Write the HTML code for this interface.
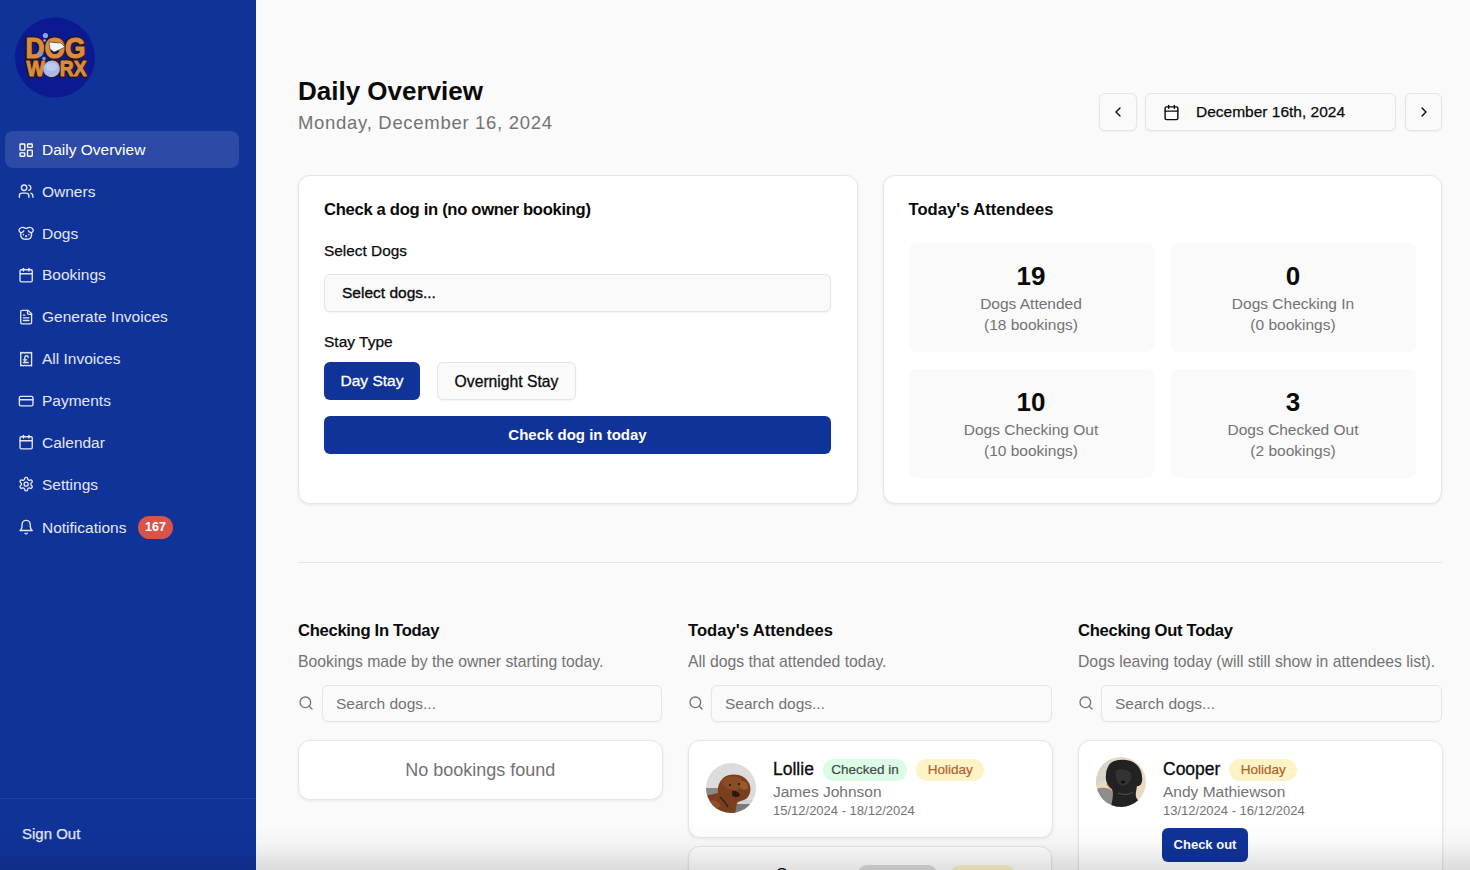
<!DOCTYPE html>
<html><head><meta charset="utf-8">
<style>
*{box-sizing:border-box;margin:0;padding:0}
html,body{width:1470px;height:870px;overflow:hidden}
body{font-family:"Liberation Sans",sans-serif;background:#fafafa;color:#0a0a0a;position:relative}
.abs{position:absolute}
svg.i{fill:none;stroke:currentColor;stroke-width:2;stroke-linecap:round;stroke-linejoin:round}
#sb{left:0;top:0;width:256px;height:870px;background:#10339a}
.nav{position:absolute;left:5px;width:234px;height:37px;border-radius:8px;color:#e3e7f3;font-size:15.5px;line-height:37px}
.nav svg{position:absolute;left:12.5px;top:10.5px;width:16.3px;height:16.3px}
.nav span{position:absolute;left:37px;top:0;white-space:nowrap}
.nav.act{background:rgba(255,255,255,.12);color:#fff}
.badge{position:absolute;background:#d9534b;color:#fff;font-weight:700;font-size:12.5px;border-radius:12px;height:23px;line-height:23px;padding:0 7px}
.card{position:absolute;background:#fff;border:1px solid #e6e6e6;border-radius:12px;box-shadow:0 1px 3px rgba(0,0,0,.08)}
.btn{position:absolute;border-radius:6px;font-size:15px;text-align:center}
.outline{background:#fafafa;border:1px solid #e5e5e5;box-shadow:0 1px 2px rgba(0,0,0,.05)}
.blue{background:#10339a;color:#fff;font-weight:700}
.stat{position:absolute;background:#fafafa;border-radius:8px;width:245px;height:109px;text-align:center}
.stat b{display:block;font-size:26px;font-weight:700;margin-top:19px;line-height:28px;margin-bottom:3px}
.stat div{font-size:15.5px;color:#737373;line-height:21px}
.h3{position:absolute;font-size:16.6px;font-weight:700;white-space:nowrap;line-height:20px;letter-spacing:-.3px}
.desc{position:absolute;font-size:15.75px;color:#737373;white-space:nowrap;margin-top:.5px}
.search{position:absolute;height:37px;border:1px solid #e5e5e5;border-radius:6px;background:#fafafa;color:#737373;font-size:15.5px;line-height:35px;padding-left:13px;box-shadow:0 1px 2px rgba(0,0,0,.04)}
.sicon{position:absolute;width:16px;height:16px;color:#737373}
.pill{display:inline-block;border-radius:12px;font-size:13.5px;font-weight:400;height:22px;line-height:22px;padding:0 10px;-webkit-text-stroke:.35px currentColor}
.med{-webkit-text-stroke:.25px currentColor}
.ov{position:absolute;left:0;top:822px;width:1470px;height:48px;background:linear-gradient(to bottom,rgba(0,0,0,0) 0%,rgba(0,0,0,.025) 45%,rgba(0,0,0,.12) 100%);pointer-events:none}
</style></head><body>

<div id="sb" class="abs">
  <!-- logo -->
  <svg class="abs" style="left:16px;top:18px;overflow:visible" width="80" height="80" viewBox="0 0 80 80">
    <circle cx="39" cy="39.5" r="40" fill="#0c1a92"/>
    <g font-family="Liberation Sans" font-weight="700" stroke-linejoin="round">
      <text x="9.5" y="39.5" font-size="29" textLength="60" lengthAdjust="spacingAndGlyphs" fill="#2b1d18" stroke="#241813" stroke-width="3.6">DOG</text>
      <text x="10.5" y="57.5" font-size="22" textLength="60" lengthAdjust="spacingAndGlyphs" fill="#2b1d18" stroke="#241813" stroke-width="3.6">WORX</text>
      <text x="9.5" y="39.5" font-size="29" textLength="60" lengthAdjust="spacingAndGlyphs" fill="#dc8a3e" stroke="#dc8a3e" stroke-width="1.1">DOG</text>
      <text x="10.5" y="57.5" font-size="22" textLength="60" lengthAdjust="spacingAndGlyphs" fill="#dc8a3e" stroke="#dc8a3e" stroke-width="1.1">WORX</text>
    </g>
    <path d="M33 24 L45 25 L49 29 L43 32 L38 34 L34 31 Z" fill="#f4f4f4" stroke="#333" stroke-width=".6"/>
    <circle cx="29.4" cy="17.5" r="2.6" fill="#8ea4e0"/>
    <circle cx="28.6" cy="22.5" r="1.3" fill="#8ea4e0"/>
    <circle cx="24" cy="35.8" r="2.6" fill="#7f96d8"/>
    <circle cx="28" cy="40.6" r="1.8" fill="#7f96d8"/>
    <circle cx="35.4" cy="51" r="8.3" fill="#a9b8ea"/>
    <ellipse cx="35.4" cy="49" rx="6" ry="4" fill="#c7d1f3" opacity=".7"/>
  </svg>

  <div class="nav act" style="top:131px"><svg class="i" viewBox="0 0 24 24"><rect width="7" height="9" x="3" y="3" rx="1"/><rect width="7" height="5" x="14" y="3" rx="1"/><rect width="7" height="9" x="14" y="12" rx="1"/><rect width="7" height="5" x="3" y="16" rx="1"/></svg><span>Daily Overview</span></div>
  <div class="nav" style="top:172.5px"><svg class="i" viewBox="0 0 24 24"><path d="M16 21v-2a4 4 0 0 0-4-4H6a4 4 0 0 0-4 4v2"/><circle cx="9" cy="7" r="4"/><path d="M22 21v-2a4 4 0 0 0-3-3.87"/><path d="M16 3.13a4 4 0 0 1 0 7.75"/></svg><span>Owners</span></div>
  <div class="nav" style="top:214.5px"><svg class="i" viewBox="0 0 24 24"><path d="M11.25 16.25h1.5L12 17z"/><path d="M16 14v.5"/><path d="M4.42 11.247A13.152 13.152 0 0 0 4 14.556C4 18.728 7.582 21 12 21s8-2.272 8-6.444a11.702 11.702 0 0 0-.493-3.309"/><path d="M8 14v.5"/><path d="M8.5 8.5c-.384 1.05-1.083 2.028-2.344 2.476-1.931.722-3.424-.299-4.04-1.386-.616-1.087-.68-2.803.378-4.168C3.618 4.05 5.23 3.5 7 3.5c1.5 0 3 .5 4 1.5h2c1-1 2.5-1.5 4-1.5 1.77 0 3.382.55 4.466 1.922 1.058 1.365.994 3.081.378 4.168-.616 1.087-2.109 2.108-4.04 1.386-1.261-.448-1.96-1.426-2.344-2.476"/></svg><span>Dogs</span></div>
  <div class="nav" style="top:256px"><svg class="i" viewBox="0 0 24 24"><path d="M8 2v4"/><path d="M16 2v4"/><rect width="18" height="18" x="3" y="4" rx="2"/><path d="M3 10h18"/></svg><span>Bookings</span></div>
  <div class="nav" style="top:298px"><svg class="i" viewBox="0 0 24 24"><path d="M15 2H6a2 2 0 0 0-2 2v16a2 2 0 0 0 2 2h12a2 2 0 0 0 2-2V7Z"/><path d="M14 2v4a2 2 0 0 0 2 2h4"/><path d="M10 9H8"/><path d="M16 13H8"/><path d="M16 17H8"/></svg><span>Generate Invoices</span></div>
  <div class="nav" style="top:340px"><svg class="i" viewBox="0 0 24 24"><path d="M4 2v20l2-1 2 1 2-1 2 1 2-1 2 1 2-1 2 1V2l-2 1-2-1-2 1-2-1-2 1-2-1-2 1Z"/><path d="M8 13h5"/><path d="M10 17V9.5a2.5 2.5 0 0 1 5 0"/><path d="M8 17h7"/></svg><span>All Invoices</span></div>
  <div class="nav" style="top:382px"><svg class="i" viewBox="0 0 24 24"><rect width="20" height="14" x="2" y="5" rx="2"/><path d="M2 10h20"/></svg><span>Payments</span></div>
  <div class="nav" style="top:423.5px"><svg class="i" viewBox="0 0 24 24"><path d="M8 2v4"/><path d="M16 2v4"/><rect width="18" height="18" x="3" y="4" rx="2"/><path d="M3 10h18"/></svg><span>Calendar</span></div>
  <div class="nav" style="top:465.5px"><svg class="i" viewBox="0 0 24 24"><path d="M12.22 2h-.44a2 2 0 0 0-2 2v.18a2 2 0 0 1-1 1.73l-.43.25a2 2 0 0 1-2 0l-.15-.08a2 2 0 0 0-2.73.73l-.22.38a2 2 0 0 0 .73 2.73l.15.1a2 2 0 0 1 1 1.72v.51a2 2 0 0 1-1 1.74l-.15.09a2 2 0 0 0-.73 2.73l.22.38a2 2 0 0 0 2.73.73l.15-.08a2 2 0 0 1 2 0l.43.25a2 2 0 0 1 1 1.73V20a2 2 0 0 0 2 2h.44a2 2 0 0 0 2-2v-.18a2 2 0 0 1 1-1.73l.43-.25a2 2 0 0 1 2 0l.15.08a2 2 0 0 0 2.73-.73l.22-.39a2 2 0 0 0-.73-2.73l-.15-.08a2 2 0 0 1-1-1.74v-.5a2 2 0 0 1 1-1.74l.15-.09a2 2 0 0 0 .73-2.73l-.22-.38a2 2 0 0 0-2.73-.73l-.15.08a2 2 0 0 1-2 0l-.43-.25a2 2 0 0 1-1-1.73V4a2 2 0 0 0-2-2z"/><circle cx="12" cy="12" r="3"/></svg><span>Settings</span></div>
  <div class="nav" style="top:508.5px"><svg class="i" viewBox="0 0 24 24"><path d="M6 8a6 6 0 0 1 12 0c0 7 3 9 3 9H3s3-2 3-9"/><path d="M10.3 21a1.94 1.94 0 0 0 3.4 0"/></svg><span>Notifications</span></div>
  <div class="badge" style="left:138px;top:515.5px">167</div>

  <div class="abs" style="left:0;top:798px;width:256px;height:1px;background:rgba(255,255,255,.08)"></div>
  <div class="abs med" style="left:22px;top:825px;font-size:15px;color:#e3e7f3">Sign Out</div>
</div>

<!-- header -->
<div class="abs" style="left:298px;top:74px;font-size:26px;font-weight:700;line-height:34px">Daily Overview</div>
<div class="abs" style="left:298px;top:111px;font-size:18.5px;color:#737373;letter-spacing:.7px;line-height:24px">Monday, December 16, 2024</div>

<div class="btn outline" style="left:1099px;top:93px;width:37.5px;height:37.5px"><svg class="i abs" style="left:10px;top:10px" width="16" height="16" viewBox="0 0 24 24"><path d="m15 18-6-6 6-6"/></svg></div>
<div class="btn outline" style="left:1145px;top:93px;width:251px;height:37.5px;text-align:left">
  <svg class="i abs" style="left:16.5px;top:9.5px" width="17" height="17" viewBox="0 0 24 24"><path d="M8 2v4"/><path d="M16 2v4"/><rect width="18" height="18" x="3" y="4" rx="2"/><path d="M3 10h18"/></svg>
  <span class="abs med" style="left:50px;top:9px;font-size:15.5px;white-space:nowrap">December 16th, 2024</span>
</div>
<div class="btn outline" style="left:1404.5px;top:93px;width:37.5px;height:37.5px"><svg class="i abs" style="left:10px;top:10px" width="16" height="16" viewBox="0 0 24 24"><path d="m9 18 6-6-6-6"/></svg></div>

<!-- card 1 -->
<div class="card" style="left:298px;top:175px;width:559.5px;height:328.5px">
  <div class="h3" style="left:25px;top:24px">Check a dog in (no owner booking)</div>
  <div class="abs med" style="left:25px;top:66px;font-size:15.4px">Select Dogs</div>
  <div class="btn outline" style="left:25px;top:98px;width:507px;height:37.5px;text-align:left;padding-left:17px;line-height:35px;font-size:15.5px;-webkit-text-stroke:.35px currentColor">Select dogs...</div>
  <div class="abs med" style="left:25px;top:157px;font-size:15.5px">Stay Type</div>
  <div class="btn blue" style="left:25px;top:186px;width:96px;height:38px;line-height:38px;font-weight:400;font-size:15.5px;-webkit-text-stroke:.3px currentColor">Day Stay</div>
  <div class="btn outline" style="left:138px;top:186px;width:139px;height:38px;line-height:37px;font-size:15.7px;-webkit-text-stroke:.3px currentColor">Overnight Stay</div>
  <div class="btn blue" style="left:25px;top:240px;width:507px;height:38px;line-height:38px">Check dog in today</div>
</div>

<!-- card 2 -->
<div class="card" style="left:882.5px;top:175px;width:559.5px;height:328.5px">
  <div class="h3" style="left:25px;top:24px;letter-spacing:0">Today's Attendees</div>
  <div class="stat" style="left:25px;top:67px"><b>19</b><div>Dogs Attended</div><div>(18 bookings)</div></div>
  <div class="stat" style="left:287px;top:67px"><b>0</b><div>Dogs Checking In</div><div>(0 bookings)</div></div>
  <div class="stat" style="left:25px;top:193px"><b>10</b><div>Dogs Checking Out</div><div>(10 bookings)</div></div>
  <div class="stat" style="left:287px;top:193px"><b>3</b><div>Dogs Checked Out</div><div>(2 bookings)</div></div>
</div>

<div class="abs" style="left:298px;top:562px;width:1144px;height:1px;background:#e5e5e5"></div>

<!-- columns -->
<div class="h3" style="left:298px;top:621px">Checking In Today</div>
<div class="desc" style="left:298px;top:652px">Bookings made by the owner starting today.</div>
<svg class="i sicon" style="left:298px;top:695px" viewBox="0 0 24 24"><circle cx="11" cy="11" r="8"/><path d="m21 21-4.3-4.3"/></svg>
<div class="search" style="left:322px;top:685px;width:340px">Search dogs...</div>
<div class="card" style="left:298px;top:739.5px;width:364.5px;height:60px;text-align:center;line-height:59px;font-size:18px;color:#737373">No bookings found</div>

<div class="h3" style="left:688px;top:621px;letter-spacing:0">Today's Attendees</div>
<div class="desc" style="left:688px;top:652px">All dogs that attended today.</div>
<svg class="i sicon" style="left:688px;top:695px" viewBox="0 0 24 24"><circle cx="11" cy="11" r="8"/><path d="m21 21-4.3-4.3"/></svg>
<div class="search" style="left:711px;top:685px;width:341px">Search dogs...</div>
<div class="card" style="left:688px;top:739.5px;width:364.5px;height:98px">
  <svg class="abs" style="left:17px;top:22px" width="50" height="50" viewBox="0 0 50 50"><defs><clipPath id="c1"><circle cx="25" cy="25" r="25"/></clipPath></defs><g clip-path="url(#c1)">
<rect width="50" height="50" fill="#dcdcdc"/>
<path d="M0 25 H14 V34 H0Z" fill="#8a8a8a"/>
<path d="M26 41 H50 V50 H26Z" fill="#7a7a7a"/>
<path d="M26 37 H50 V41 H26Z" fill="#d2d2d2"/>
<path d="M0 33 C5 31 9 31 12 30 C11 22 15 14 23 12 C31 10 40 13 43 20 C46 26 44 33 40 36 C36 38 33 38 31 40 C30 44 30 48 29 50 H0Z" fill="#7a3f1c"/>
<path d="M15 18 C19 13 28 12 34 15 C38 19 36 25 31 27 C25 28 18 25 15 18Z" fill="#8a4c24"/>
<path d="M34 18 C38 17 42 20 42 25 C40 28 36 27 34 24Z" fill="#9a5a2c"/>
<path d="M26 28 C29 27 33 29 34 32 C32 35 28 35 26 32Z" fill="#2a1a12"/>
<path d="M3 38 C8 36 12 38 14 42 L10 50 H0 V40Z" fill="#8f4f28"/>
<circle cx="24" cy="22" r="1.1" fill="#1b120c"/><circle cx="33" cy="21" r="1" fill="#1b120c"/>
<path d="M14 34 C17 37 20 40 22 44" stroke="#3a2214" stroke-width="1.6" fill="none"/>
</g></svg>
  <div class="abs" style="left:84px;top:17.5px;white-space:nowrap;font-size:17.5px;line-height:22px;-webkit-text-stroke:.3px currentColor">Lollie <span class="pill" style="background:#dcfce7;color:#3f4a44;margin-left:4px;padding:0 8.5px;vertical-align:1px;-webkit-text-stroke:.2px currentColor">Checked in</span> <span class="pill" style="background:#fef3c7;color:#b0612a;margin-left:4px;padding:0 11.5px;vertical-align:1px;-webkit-text-stroke:.2px currentColor">Holiday</span></div>
  <div class="abs" style="left:84px;top:42.5px;font-size:15.5px;color:#737373">James Johnson</div>
  <div class="abs" style="left:84px;top:62.5px;font-size:13px;color:#737373">15/12/2024 - 18/12/2024</div>
</div>
<div class="card" style="left:688px;top:846px;width:364px;height:97px">
  <div class="abs" style="left:87px;top:17px;width:70px;height:8px;overflow:hidden"><span style="display:block;font-size:17.5px;line-height:22px;margin-top:0">Seaweed</span></div>
  <span class="pill abs" style="left:168px;top:18px;background:#dcdcdc;color:#3f4a44;width:81px">&nbsp;</span>
  <span class="pill abs" style="left:261px;top:18px;background:#fef3c7;color:#b45309;width:66px">&nbsp;</span>
</div>

<div class="h3" style="left:1078px;top:621px">Checking Out Today</div>
<div class="desc" style="left:1078px;top:652px">Dogs leaving today (will still show in attendees list).</div>
<svg class="i sicon" style="left:1078px;top:695px" viewBox="0 0 24 24"><circle cx="11" cy="11" r="8"/><path d="m21 21-4.3-4.3"/></svg>
<div class="search" style="left:1101px;top:685px;width:341px">Search dogs...</div>
<div class="card" style="left:1078px;top:739.5px;width:364.5px;height:160px">
  <svg class="abs" style="left:17px;top:16px" width="50" height="50" viewBox="0 0 50 50"><defs><clipPath id="c2"><circle cx="25" cy="25" r="25"/></clipPath></defs><g clip-path="url(#c2)">
<rect width="50" height="50" fill="#e7dcc2"/>
<path d="M0 0 H16 V20 C10 22 6 26 0 28Z" fill="#d9d4c8"/>
<path d="M0 32 C6 30 12 30 16 34 L22 50 H0Z" fill="#8e8e8e"/>
<path d="M10 27 L20 26 L23 32 L19 38 Z" fill="#dc9a6c"/>
<path d="M12 10 C14 4 22 2 30 3 C40 4 46 12 46 20 C47 26 44 30 41 29 C40 36 38 40 43 44 L46 50 H15 C16 44 18 38 16 32 C12 30 9 24 10 18 C10 14 11 12 12 10Z" fill="#232222"/>
<path d="M20 14 C24 11 31 12 35 16 C37 22 33 28 27 29 C22 28 19 22 20 14Z" fill="#343333"/>
<ellipse cx="27" cy="25" rx="2.2" ry="1.5" fill="#111"/>
<path d="M22 36 C27 38 33 38 37 35" stroke="#555" stroke-width="1" fill="none"/>
</g></svg>
  <div class="abs" style="left:84px;top:17.5px;white-space:nowrap;font-size:17.5px;line-height:22px;-webkit-text-stroke:.3px currentColor">Cooper <span class="pill" style="background:#fef3c7;color:#b0612a;margin-left:4px;padding:0 11.5px;vertical-align:1px;-webkit-text-stroke:.2px currentColor">Holiday</span></div>
  <div class="abs" style="left:84px;top:42.5px;font-size:15.5px;color:#737373">Andy Mathiewson</div>
  <div class="abs" style="left:84px;top:62.5px;font-size:13px;color:#737373">13/12/2024 - 16/12/2024</div>
  <div class="btn blue" style="left:83px;top:87.5px;width:86px;height:33.5px;line-height:33.5px;font-size:13px">Check out</div>
</div>

<div class="ov"></div>
</body></html>
